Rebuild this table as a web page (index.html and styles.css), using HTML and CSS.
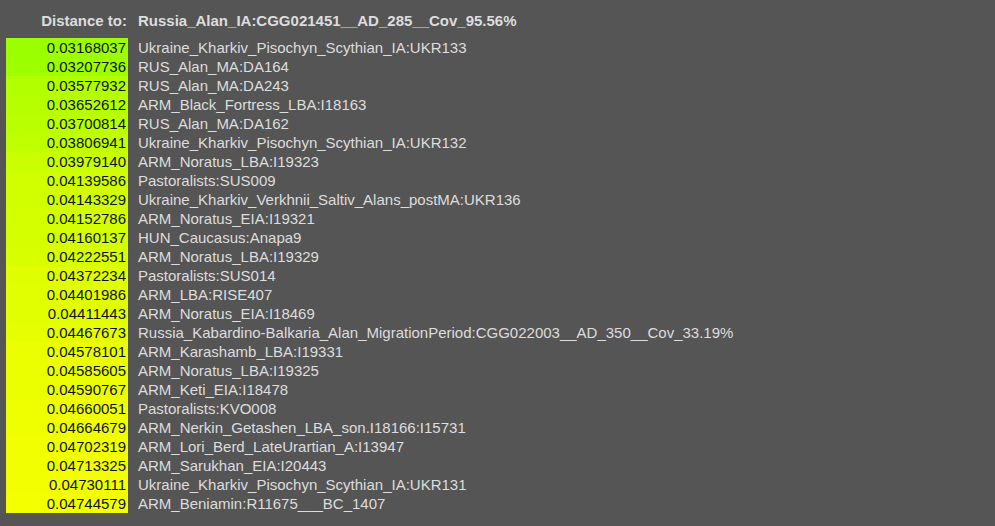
FILE: index.html
```html
<!DOCTYPE html>
<html>
<head>
<meta charset="utf-8">
<link rel="stylesheet" href="styles.css">
</head>
<body>
<div class="sheet">
  <div class="head">
    <div class="head-label">Distance to:</div>
    <div class="head-target">Russia_Alan_IA:CGG021451__AD_285__Cov_95.56%</div>
  </div>
  <div class="rows">
    <div class="dist" style="background:rgb(155,255,0)">0.03168037</div><div class="name">Ukraine_Kharkiv_Pisochyn_Scythian_IA:UKR133</div>
    <div class="dist" style="background:rgb(157,255,0)">0.03207736</div><div class="name">RUS_Alan_MA:DA164</div>
    <div class="dist" style="background:rgb(178,255,0)">0.03577932</div><div class="name">RUS_Alan_MA:DA243</div>
    <div class="dist" style="background:rgb(182,255,0)">0.03652612</div><div class="name">ARM_Black_Fortress_LBA:I18163</div>
    <div class="dist" style="background:rgb(185,255,0)">0.03700814</div><div class="name">RUS_Alan_MA:DA162</div>
    <div class="dist" style="background:rgb(191,255,0)">0.03806941</div><div class="name">Ukraine_Kharkiv_Pisochyn_Scythian_IA:UKR132</div>
    <div class="dist" style="background:rgb(201,255,0)">0.03979140</div><div class="name">ARM_Noratus_LBA:I19323</div>
    <div class="dist" style="background:rgb(210,255,0)">0.04139586</div><div class="name">Pastoralists:SUS009</div>
    <div class="dist" style="background:rgb(210,255,0)">0.04143329</div><div class="name">Ukraine_Kharkiv_Verkhnii_Saltiv_Alans_postMA:UKR136</div>
    <div class="dist" style="background:rgb(211,255,0)">0.04152786</div><div class="name">ARM_Noratus_EIA:I19321</div>
    <div class="dist" style="background:rgb(211,255,0)">0.04160137</div><div class="name">HUN_Caucasus:Anapa9</div>
    <div class="dist" style="background:rgb(215,255,0)">0.04222551</div><div class="name">ARM_Noratus_LBA:I19329</div>
    <div class="dist" style="background:rgb(223,255,0)">0.04372234</div><div class="name">Pastoralists:SUS014</div>
    <div class="dist" style="background:rgb(225,255,0)">0.04401986</div><div class="name">ARM_LBA:RISE407</div>
    <div class="dist" style="background:rgb(225,255,0)">0.04411443</div><div class="name">ARM_Noratus_EIA:I18469</div>
    <div class="dist" style="background:rgb(229,255,0)">0.04467673</div><div class="name">Russia_Kabardino-Balkaria_Alan_MigrationPeriod:CGG022003__AD_350__Cov_33.19%</div>
    <div class="dist" style="background:rgb(235,255,0)">0.04578101</div><div class="name">ARM_Karashamb_LBA:I19331</div>
    <div class="dist" style="background:rgb(235,255,0)">0.04585605</div><div class="name">ARM_Noratus_LBA:I19325</div>
    <div class="dist" style="background:rgb(236,255,0)">0.04590767</div><div class="name">ARM_Keti_EIA:I18478</div>
    <div class="dist" style="background:rgb(240,255,0)">0.04660051</div><div class="name">Pastoralists:KVO008</div>
    <div class="dist" style="background:rgb(240,255,0)">0.04664679</div><div class="name">ARM_Nerkin_Getashen_LBA_son.I18166:I15731</div>
    <div class="dist" style="background:rgb(242,255,0)">0.04702319</div><div class="name">ARM_Lori_Berd_LateUrartian_A:I13947</div>
    <div class="dist" style="background:rgb(242,255,0)">0.04713325</div><div class="name">ARM_Sarukhan_EIA:I20443</div>
    <div class="dist" style="background:rgb(243,255,0)">0.04730111</div><div class="name">Ukraine_Kharkiv_Pisochyn_Scythian_IA:UKR131</div>
    <div class="dist" style="background:rgb(244,255,0)">0.04744579</div><div class="name">ARM_Beniamin:R11675___BC_1407</div>
  </div>
</div>
</body>
</html>
```

FILE: styles.css
```css
html, body {
  margin: 0;
  padding: 0;
  background: #555555;
}
body {
  font-family: "Liberation Sans", Arial, sans-serif;
  font-size: 15px;
  line-height: 19px;
  color: #dddddd;
}
.sheet {
  padding: 11px 0 0 6px;
}
.head {
  display: grid;
  grid-template-columns: 122px auto;
  column-gap: 10px;
  font-weight: bold;
  margin-bottom: 8px;
}
.head-label {
  text-align: right;
  padding-right: 1px;
}
.rows {
  display: grid;
  grid-template-columns: 122px auto;
  column-gap: 10px;
}
.dist {
  color: #111111;
  text-align: right;
  padding-right: 2px;
  height: 19px;
}
.name {
  white-space: nowrap;
  height: 19px;
}
```
